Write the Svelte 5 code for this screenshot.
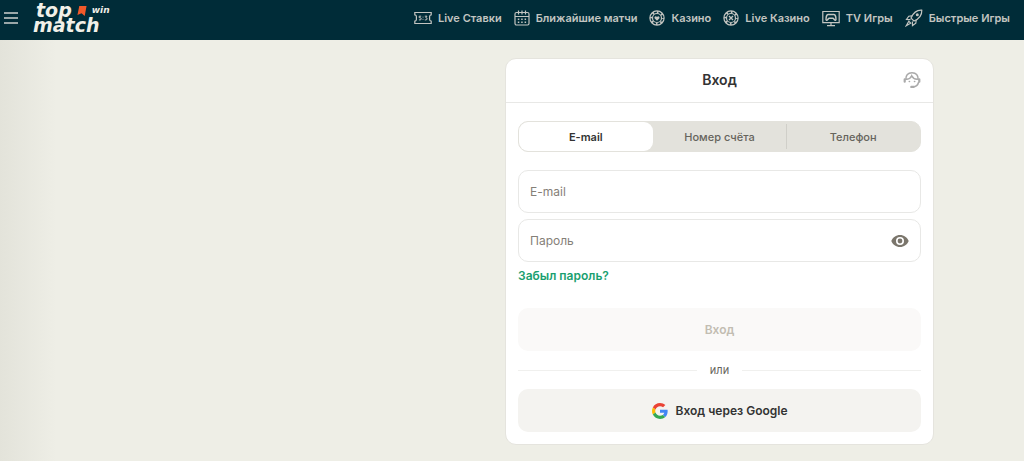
<script lang="ts">
  type Tab = { id: string; label: string };

  const links = [
    { icon: "score", label: "Live Ставки" },
    { icon: "calendar", label: "Ближайшие матчи" },
    { icon: "chip", label: "Казино" },
    { icon: "liveChip", label: "Live Казино" },
    { icon: "tv", label: "TV Игры" },
    { icon: "rocket", label: "Быстрые Игры" },
  ];

  const compactIcons = ["calendar", "chip", "liveChip"];

  const tabs: Tab[] = [
    { id: "email", label: "E-mail" },
    { id: "account", label: "Номер счёта" },
    { id: "phone", label: "Телефон" },
  ];

  let activeTab = $state("email");
  let login = $state("");
  let password = $state("");
  let showPassword = $state(false);

  let loginLabel = $derived(tabs.find((tab) => tab.id === activeTab)?.label ?? "");
  let canSubmit = $derived(login.length > 0 && password.length > 0);

  function selectTab(id: string) {
    activeTab = id;
    login = "";
  }

  function onSubmit(event: SubmitEvent) {
    event.preventDefault();
  }
</script>

{#snippet navIcon(name: string)}
  <svg
    class="nav-icon"
    class:compact={compactIcons.includes(name)}
    viewBox={compactIcons.includes(name) ? "1 1 16 16" : "0 0 18 18"}
    aria-hidden="true"
  >
    {#if name === "score"}
      <path d="M.8 3.500h16.400v2.300q-1.600.2-1.600 1.600v3.200q0 1.400 1.600 1.600v2.300H.8v-2.300q1.600-.2 1.600-1.600V7.400q0-1.400-1.600-1.600z" />
      <path d="M7.200 7.200H5.200v1.500h1q1 0 1 1.100t-1 1.100H4.900M10.800 7.200h2.200L11.800 8.700q1.300 0 1.300 1.100t-1.300 1.100h-1M9 7.700v.8M9 9.900v.8" stroke-width="1" />
    {:else if name === "calendar"}
      <rect x="2" y="3.500" width="14" height="12.500" rx="1.500" />
      <path d="M2 7.500h14M5.500 1.500v4M9 1.500v4M12.500 1.500v4" />
      <path d="M4.800 10.300h1.500M8.200 10.300h1.500M11.600 10.300h1.500M4.800 13.200h1.500M8.200 13.200h1.500M11.600 13.200h1.500" stroke-width="1.500" />
    {:else if name === "chip" || name === "liveChip"}
      <circle cx="9" cy="9" r="7.100" />
      <circle cx="9" cy="9" r="5.900" stroke-width="2" stroke-dasharray="1.700 2.934" stroke-dashoffset="0.850" />
      <circle cx="9" cy="9" r="4.500" />
      {#if name === "chip"}
        <path class="solid" d="M9 11.800 6.700 9.500C5.700 8.200 7.600 6.300 9 8c1.400-1.700 3.300.2 2.300 1.500z" />
      {:else}
        <path d="m7 7 4 4m0-4-4 4" stroke-width="1.400" />
      {/if}
    {:else if name === "tv"}
      <path d="M.8 2.500h16.400v11.200H.8zM9 14v2.500M5 16.700h8" />
      <path d="M4.500 11.200c-.9-.4-.4-5.600 1.600-5.600h5.800c2 0 2.500 5.200 1.600 5.600-1 .5-1.700-1.900-2.700-1.900H7.200c-1 0-1.700 2.400-2.700 1.900z" stroke-width="1.500" />
    {:else}
      <path d="M16.800 1.200c-4.600-.3-8.700 2.900-10.800 7.900L9 12c5-2.200 8-6.200 7.800-10.800z" />
      <path d="M7.200 6.800 3.800 7.200 1.500 10.500l4 .1M11.200 10.800l-.4 3.400-3.300 2.400-.1-4" />
      <path d="M3.800 12.300 1.300 16.700l4.400-2.500z" />
      <circle class="solid" cx="12.300" cy="5.700" r="1.500" />
    {/if}
  </svg>
{/snippet}

<header class="topbar">
  <button class="menu" type="button" aria-label="Меню"><span></span><span></span><span></span></button>
  <a class="logo" href="#home">
    <span class="logo-row">
      top
      <svg class="flag" viewBox="0 0 10 11" aria-hidden="true">
        <path d="M2 0h8L8 11 4.500 8 0 10z" />
      </svg>
      <small>win</small>
    </span>
    <span class="logo-row">match</span>
  </a>
  <nav>
    {#each links as link}
      <a href="#{link.icon}">{@render navIcon(link.icon)}{link.label}</a>
    {/each}
  </nav>
</header>

<main>
  <section class="card">
    <div class="card-header">
      <h1>Вход</h1>
      <button class="support" type="button" aria-label="Поддержка">
        <svg viewBox="0 0 18 18" aria-hidden="true">
          <path d="M2.800 8.500C2.800 4 5.300 1.700 9 1.700s6.200 2.300 6.200 6.800M4 8.300C6.500 8 8 6.500 8.700 4.800c1 2 3 3.300 5.300 3.500M15.500 11.500c-.6 2.600-2.600 4.200-5.500 4.200" />
          <path d="M1.700 8.300v2.400M16.300 8.300v2.400" stroke-width="2.200" />
          <path d="M8.400 15.900h2" stroke-width="2.400" />
          <path d="M6.300 10.500h.2M11.500 10.500h.2" stroke-width="1.600" />
        </svg>
      </button>
    </div>

    <form onsubmit={onSubmit}>
      <div class="tabs" role="tablist">
        {#each tabs as tab}
          <button
            type="button"
            role="tab"
            class:active={tab.id === activeTab}
            aria-selected={tab.id === activeTab}
            onclick={() => selectTab(tab.id)}
          >
            {tab.label}
          </button>
        {/each}
      </div>

      <div class="fields">
        <div class="field">
          <input type="text" aria-label={loginLabel} placeholder={loginLabel} bind:value={login} />
        </div>
        <div class="field">
          <input
            type={showPassword ? "text" : "password"}
            aria-label="Пароль"
            placeholder="Пароль"
            bind:value={password}
          />
          <button
            class="eye"
            type="button"
            aria-label="Показать пароль"
            aria-pressed={showPassword}
            onclick={() => (showPassword = !showPassword)}
          >
            <svg viewBox="0 0 18 12" aria-hidden="true">
              <path
                fill-rule="evenodd"
                d="M9 0c4 0 7.300 2.500 8.700 6-1.400 3.500-4.700 6-8.700 6S1.700 9.500.3 6C1.700 2.500 5 0 9 0zm0 2a4 4 0 1 0 0 8 4 4 0 0 0 0-8zm0 1.600a2.400 2.400 0 1 1 0 4.800 2.400 2.400 0 0 1 0-4.800z"
              />
            </svg>
          </button>
        </div>
        <a class="forgot" href="#forgot">Забыл пароль?</a>
      </div>

      <button class="submit" type="submit" disabled={!canSubmit}>Вход</button>
      <div class="divider">или</div>
      <button class="google" type="button">
        <svg viewBox="0 0 48 48" aria-hidden="true">
          <path fill="#ea4335" d="M24 9.500c3.540 0 6.710 1.220 9.210 3.600l6.850-6.850C35.900 2.380 30.470 0 24 0 14.620 0 6.510 5.380 2.560 13.220l7.980 6.190C12.430 13.720 17.740 9.500 24 9.500z" />
          <path fill="#4285f4" d="M46.980 24.550c0-1.570-.15-3.090-.38-4.550H24v9.020h12.940c-.58 2.960-2.260 5.480-4.780 7.180l7.730 6c4.510-4.180 7.090-10.360 7.090-17.650z" />
          <path fill="#fbbc05" d="M10.530 28.590c-.48-1.450-.76-2.990-.76-4.590s.27-3.140.76-4.590l-7.980-6.190C.92 16.460 0 20.120 0 24s.92 7.540 2.560 10.780l7.970-6.190z" />
          <path fill="#34a853" d="M24 48c6.480 0 11.930-2.130 15.890-5.810l-7.730-6c-2.150 1.450-4.920 2.300-8.160 2.300-6.260 0-11.570-4.220-13.470-9.910l-7.980 6.190C6.510 42.620 14.620 48 24 48z" />
        </svg>
        Вход через Google
      </button>
    </form>
  </section>
</main>

<style>
  :global(body) {
    background: #eeeee6;
    color: #333333;
    font-family: Inter, "Liberation Sans", sans-serif;
  }

  button {
    border: 0;
    padding: 0;
    background: none;
    color: inherit;
    font: inherit;
    cursor: pointer;
  }

  a {
    text-decoration: none;
  }

  svg {
    flex: none;
  }

  .topbar {
    display: flex;
    align-items: center;
    box-sizing: border-box;
    height: 40px;
    padding: 0 14px 4px 4px;
    background: #002c38;
    color: #c3c5c1;
  }

  .menu {
    display: grid;
    gap: 3px;
    width: 14px;
  }

  .menu span {
    height: 2px;
    background: #9aa7a8;
  }

  .logo {
    margin-left: 15px;
    color: #f1f0e8;
    font: italic bold 19px/15px "DejaVu Sans", sans-serif;
  }

  .logo-row {
    display: flex;
    align-items: center;
    gap: 5px;
  }

  .logo-row:first-child {
    padding-left: 3px;
  }

  .flag {
    width: 10px;
    height: 10px;
    fill: #f1592a;
  }

  .logo small {
    font-size: 9px;
    line-height: 15px;
  }

  nav {
    display: flex;
    gap: 12px;
    margin-left: auto;
  }

  nav a {
    display: flex;
    align-items: center;
    gap: 6px;
    color: #c3c5c1;
    font-size: 11px;
    font-weight: 600;
    line-height: 18px;
    white-space: nowrap;
  }

  .nav-icon {
    width: 18px;
    height: 18px;
    fill: none;
    stroke: currentColor;
    stroke-width: 1.2;
  }

  .nav-icon.compact {
    width: 16px;
    height: 16px;
  }

  .nav-icon .solid {
    fill: currentColor;
    stroke: none;
  }

  main {
    display: flex;
    justify-content: center;
    padding: 18px 0 16px 415px;
    background: linear-gradient(to right, #e3e3da, #eeeee6 56px);
  }

  .card {
    box-sizing: border-box;
    width: 429px;
    border: 1px solid #e5e4de;
    border-radius: 11px;
    background: #ffffff;
  }

  .card-header {
    display: grid;
    grid-template-columns: 1fr auto 1fr;
    align-items: center;
    box-sizing: border-box;
    height: 44px;
    padding: 0 12px 2px;
    border-bottom: 1px solid #e8e8e6;
  }

  h1 {
    grid-column: 2;
    margin: 0;
    font-size: 14px;
    font-weight: 600;
    line-height: 20px;
  }

  .support {
    justify-self: end;
    height: 18px;
  }

  .support svg {
    width: 18px;
    height: 18px;
    fill: none;
    stroke: #aaaaaa;
    stroke-width: 1.5;
    stroke-linecap: round;
  }

  form {
    display: flex;
    flex-direction: column;
    padding: 18px 12px 12px;
  }

  .tabs {
    display: grid;
    grid-template-columns: repeat(3, 1fr);
    box-sizing: border-box;
    height: 31px;
    border: 1px solid #e3e2dc;
    border-radius: 10px;
    background: #e3e2dc;
  }

  .tabs button {
    display: flex;
    align-items: center;
    justify-content: center;
    color: #66645c;
    font-size: 11px;
    font-weight: 500;
  }

  .tabs button:last-child::before {
    content: "";
    width: 1px;
    height: 25px;
    margin-right: auto;
    background: #d0cfc9;
  }

  .tabs button:last-child::after {
    content: "";
    width: 1px;
    margin-left: auto;
  }

  .tabs button.active {
    border-radius: 9px;
    background: #ffffff;
    color: #333333;
    font-weight: 600;
  }

  .fields {
    display: grid;
    gap: 6px;
    margin-top: 18px;
  }

  .field {
    display: flex;
    align-items: center;
    box-sizing: border-box;
    height: 43px;
    padding: 0 11px;
    border: 1px solid #e8e8e6;
    border-radius: 10px;
  }

  .field input {
    flex: 1;
    min-width: 0;
    border: 0;
    padding: 0;
    outline: 0;
    background: none;
    color: #333333;
    font: 12px/18px Inter, "Liberation Sans", sans-serif;
  }

  .field input::placeholder {
    color: #858078;
    opacity: 1;
  }

  .eye {
    display: flex;
  }

  .eye svg {
    width: 18px;
    height: 12px;
    fill: #7b766c;
  }

  .forgot {
    justify-self: start;
    color: #1a9f70;
    font-size: 12px;
    font-weight: 600;
    line-height: 16px;
  }

  .submit,
  .google {
    display: flex;
    align-items: center;
    justify-content: center;
    height: 43px;
    border-radius: 10px;
    font-size: 12px;
    font-weight: 600;
  }

  .submit {
    margin-top: 24px;
    background: #f4f3f0;
  }

  .submit:disabled {
    background: #faf9f8;
    color: #c2bdb2;
    cursor: default;
  }

  .divider {
    display: flex;
    align-items: center;
    gap: 13px;
    height: 38px;
    color: #66645c;
    font-size: 11px;
  }

  .divider::before,
  .divider::after {
    content: "";
    flex: 1;
    height: 1px;
    background: #f0f0ee;
  }

  .google {
    gap: 8px;
    background: #f4f3f0;
  }

  .google svg {
    width: 16px;
    height: 16px;
  }
</style>
